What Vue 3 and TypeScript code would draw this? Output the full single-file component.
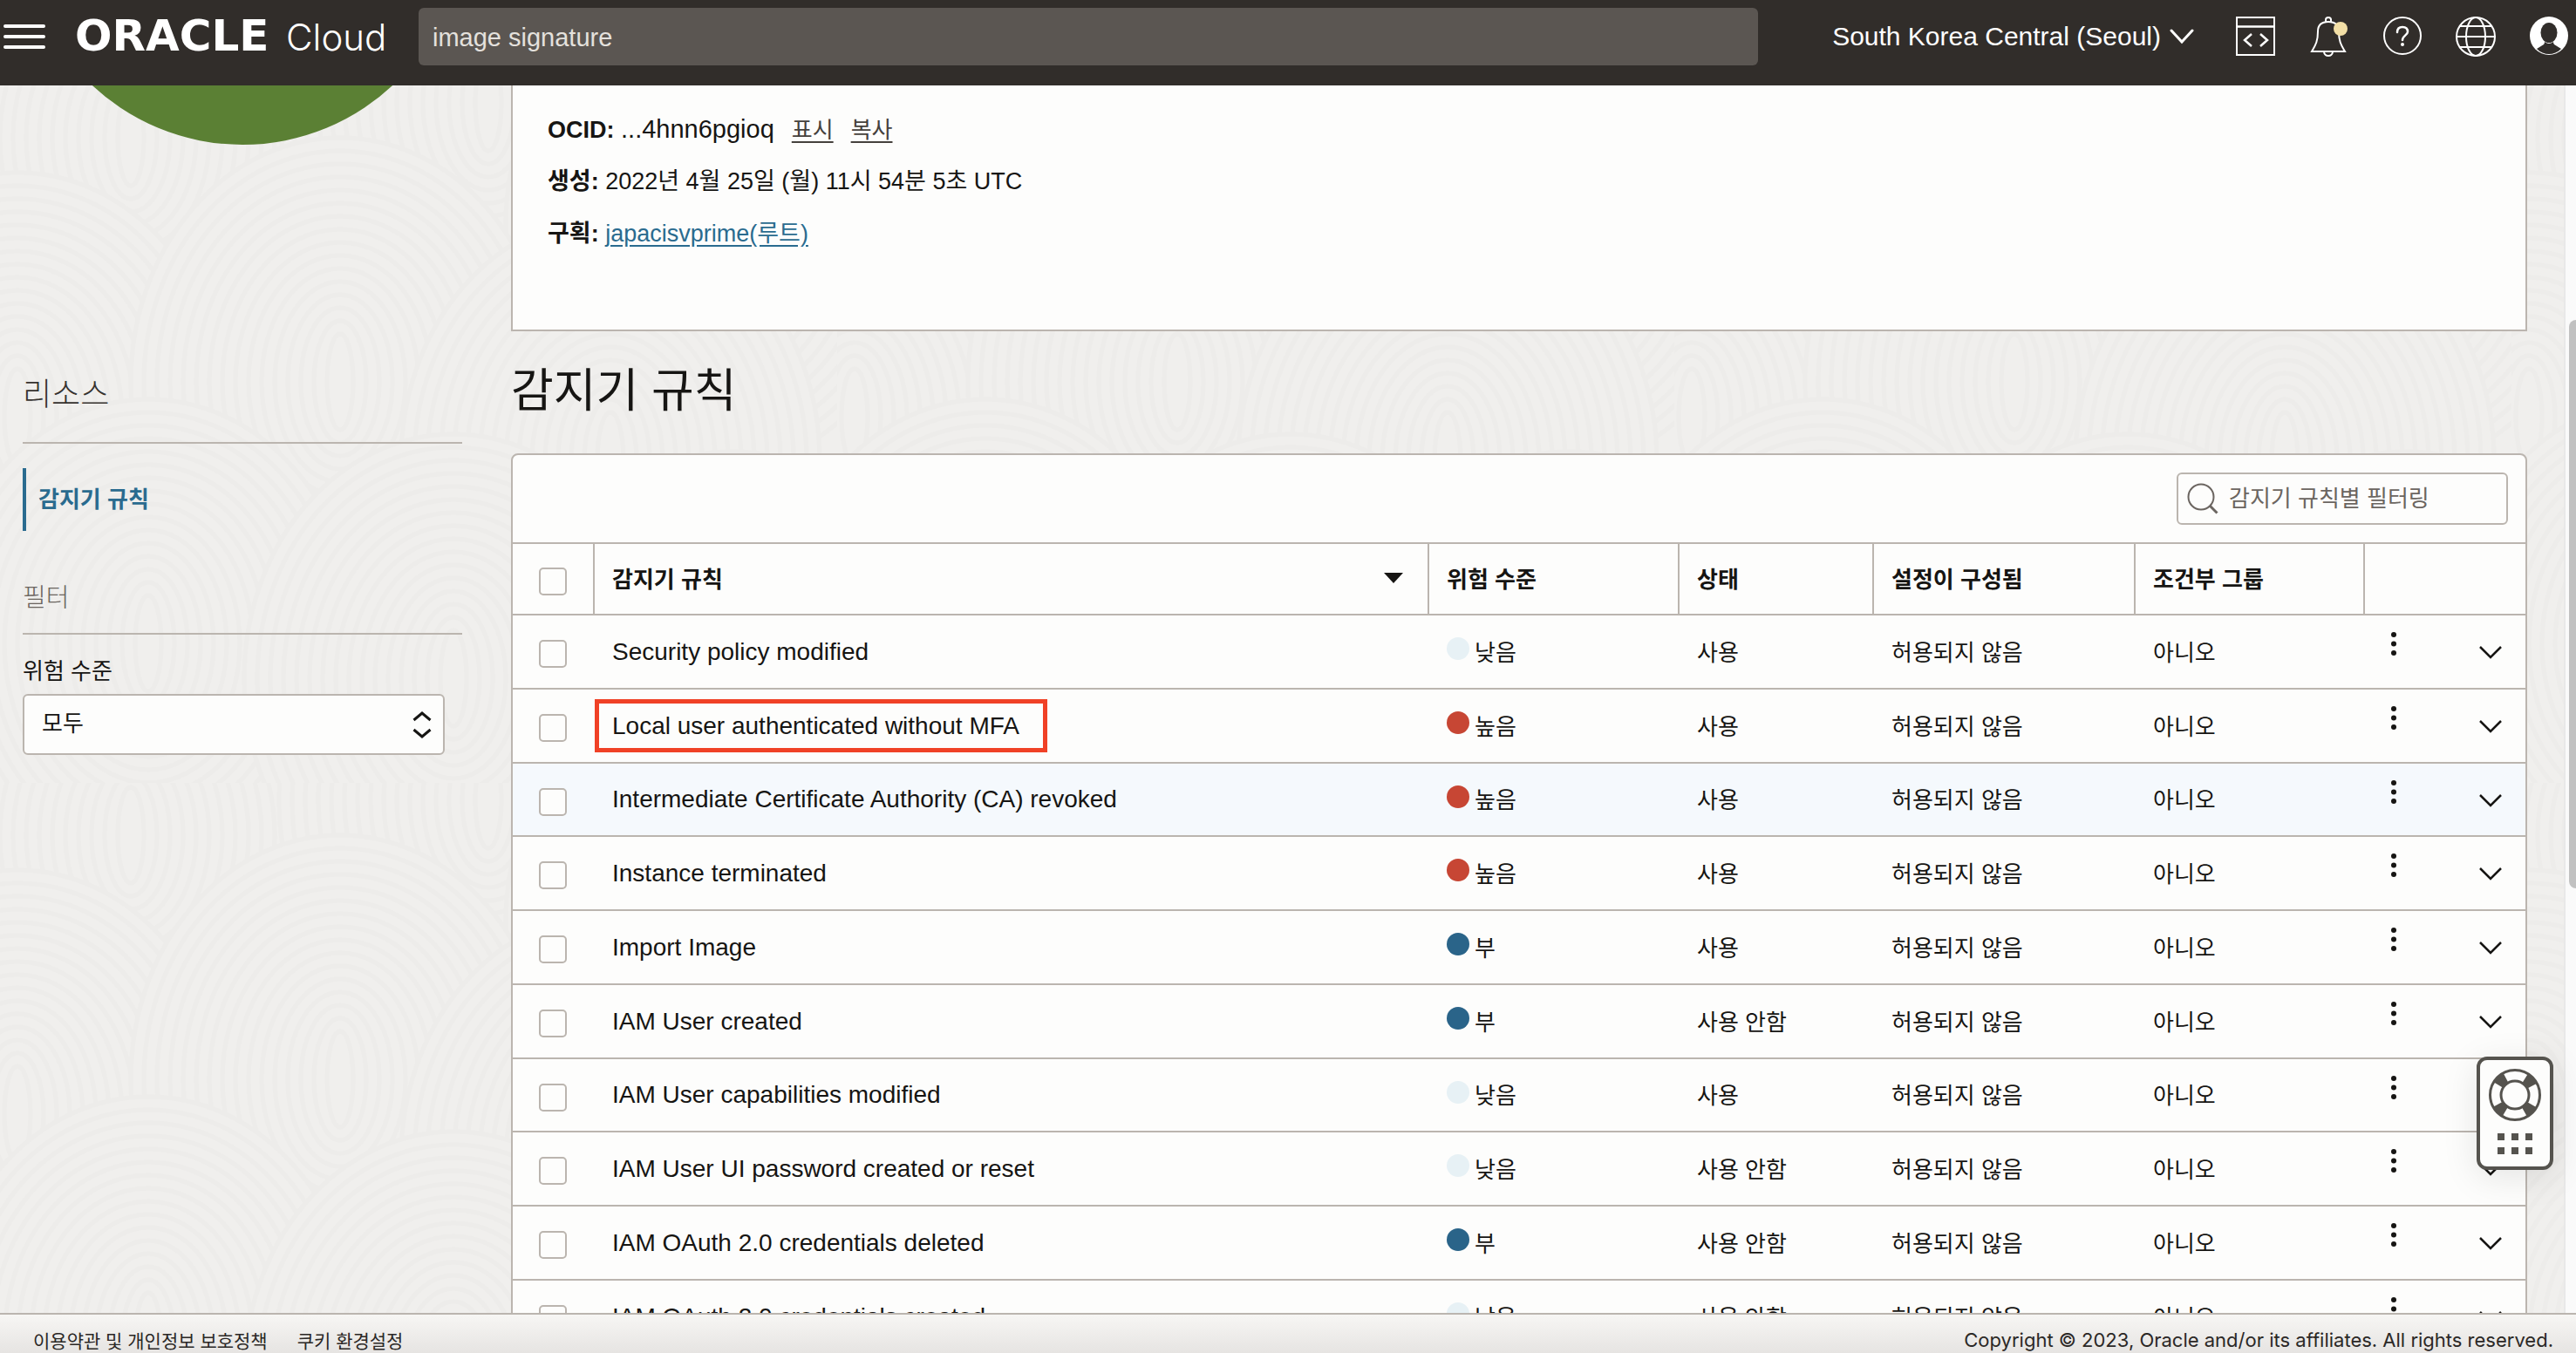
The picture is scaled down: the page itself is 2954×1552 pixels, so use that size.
<script setup lang="ts">
import { ref } from 'vue'

type Risk = 'low' | 'high' | 'minor'

interface Rule {
  name: string
  risk: Risk
  enabled: boolean
  marked?: boolean
  hovered?: boolean
}

const riskLabels: Record<Risk, string> = { low: '낮음', high: '높음', minor: '부' }

const rules: Rule[] = [
  { name: 'Security policy modified', risk: 'low', enabled: true },
  { name: 'Local user authenticated without MFA', risk: 'high', enabled: true, marked: true },
  { name: 'Intermediate Certificate Authority (CA) revoked', risk: 'high', enabled: true, hovered: true },
  { name: 'Instance terminated', risk: 'high', enabled: true },
  { name: 'Import Image', risk: 'minor', enabled: true },
  { name: 'IAM User created', risk: 'minor', enabled: false },
  { name: 'IAM User capabilities modified', risk: 'low', enabled: true },
  { name: 'IAM User UI password created or reset', risk: 'low', enabled: false },
  { name: 'IAM OAuth 2.0 credentials deleted', risk: 'minor', enabled: false },
  { name: 'IAM OAuth 2.0 credentials created', risk: 'low', enabled: false },
]

const query = ref('image signature')
const filter = ref('')
const riskFilter = ref('all')

// Overlapping ring groups of the background texture
const ringGroups = [
  { x: 150, y: 60 }, { x: 560, y: 20 }, { x: 820, y: 160 },
  { x: 20, y: 380 }, { x: 390, y: 340 }, { x: 700, y: 430 },
  { x: 170, y: 640 }, { x: 520, y: 680 }, { x: 840, y: 700 },
]
const ringSizes = Array.from({ length: 16 }, (_, i) => 240 - i * 15)
</script>

<template>
  <div class="app">
    <header class="topbar">
      <button class="icon-btn menu" aria-label="메뉴">
        <svg width="48" height="28" viewBox="0 0 48 28" stroke="#fff" stroke-width="4" stroke-linecap="round">
          <path d="M2 2H46M2 14H46M2 26H46" />
        </svg>
      </button>
      <a class="brand" href="#"><strong>ORACLE</strong><span>Cloud</span></a>
      <input v-model="query" class="search" type="text" aria-label="검색" />
      <div class="tools">
        <button class="region">
          South Korea Central (Seoul)
          <svg width="28" height="18" viewBox="0 0 28 18" fill="none" stroke="#fff" stroke-width="3" stroke-linecap="round">
            <path d="M2 2L14 15L26 2" />
          </svg>
        </button>
        <button class="icon-btn" aria-label="개발자 도구">
          <svg width="46" height="46" viewBox="0 0 46 46" fill="none" stroke="#fff" stroke-width="2">
            <rect x="1" y="1" width="43" height="43" />
            <path d="M1 11.500H44M18 20L10 27L18 34M28 20L36 27L28 34" stroke-width="2.500" />
          </svg>
        </button>
        <button class="icon-btn" aria-label="알림">
          <svg width="46" height="48" viewBox="0 0 46 48" fill="none" stroke="#fff" stroke-width="2">
            <path d="M19 7V4.500Q19 2 22 2Q25 2 25 4.500V7" />
            <path d="M22 7C14 7 10 11 10 18C10 30 7 34 3 41H41C37 34 34 30 34 18C34 11 30 7 22 7Z" />
            <path d="M17 42Q18 46 22 46Q26 46 27 42" />
            <circle cx="36" cy="15" r="8" fill="#f3dfa6" stroke="none" />
          </svg>
        </button>
        <button class="icon-btn" aria-label="도움말">
          <svg width="46" height="46" viewBox="0 0 46 46" fill="none" stroke="#fff" stroke-width="2">
            <circle cx="23" cy="22" r="21" />
            <path d="M17 18C17 14 19 12 23 12C27 12 29 14 29 17.500C29 21 23 22 23 27" stroke-width="2.500" stroke-linecap="round" />
            <circle cx="23" cy="32" r="2" fill="#fff" stroke="none" />
          </svg>
        </button>
        <button class="icon-btn" aria-label="언어">
          <svg width="46" height="46" viewBox="0 0 46 46" fill="none" stroke="#fff" stroke-width="2">
            <circle cx="23" cy="23" r="22" />
            <ellipse cx="23" cy="23" rx="11" ry="22" />
            <path d="M1 23H45M5 11H41M5 35H41" />
          </svg>
        </button>
        <button class="icon-btn" aria-label="프로필">
          <svg width="46" height="46" viewBox="0 0 46 46">
            <circle cx="23" cy="22" r="22" fill="#fff" />
            <ellipse cx="23" cy="18.500" rx="9.500" ry="11.500" fill="#312d2a" />
            <path d="M9 37L17 32Q18 31 18 29Q23 33 28 29Q28 31 29 32L37 37C29 45 17 45 9 37Z" fill="#312d2a" />
          </svg>
        </button>
      </div>
    </header>

    <div class="page">
      <svg class="texture" width="100%" height="100%" aria-hidden="true">
        <defs>
          <pattern id="rings" width="960" height="800" patternUnits="userSpaceOnUse">
            <rect width="960" height="800" fill="#f0efed" />
            <g v-for="(g, i) in ringGroups" :key="i">
              <ellipse
                v-for="r in ringSizes"
                :key="r"
                :cx="g.x"
                :cy="g.y"
                :rx="r"
                :ry="r + 40"
                fill="#f0efed"
                stroke="#edecea"
                stroke-width="5"
              />
            </g>
          </pattern>
        </defs>
        <rect width="100%" height="100%" fill="url(#rings)" />
      </svg>

      <aside class="sidebar">
        <div class="badge-window"><div class="badge"></div></div>
        <h2 class="side-title">리소스</h2>
        <nav><a class="side-link" href="#">감지기 규칙</a></nav>
        <h3 class="side-subtitle">필터</h3>
        <label class="side-label" for="risk">위험 수준</label>
        <div class="select-wrap">
          <select id="risk" v-model="riskFilter">
            <option value="all">모두</option>
            <option value="high">높음</option>
            <option value="low">낮음</option>
          </select>
          <svg width="22" height="32" viewBox="0 0 22 32" fill="none" stroke="#161513" stroke-width="3">
            <path d="M1.500 11L11 3L20.500 11M1.500 22L11 30L20.500 22" />
          </svg>
        </div>
      </aside>

      <main class="content">
        <section class="info">
          <p><b>OCID:</b> <span class="latin">...4hnn6pgioq</span><a class="action" href="#">표시</a><a class="action" href="#">복사</a></p>
          <p><b>생성:</b> 2022년 4월 25일 (월) 11시 54분 5초 UTC</p>
          <p><b>구획:</b> <a class="link" href="#">japacisvprime(루트)</a></p>
        </section>

        <h1>감지기 규칙</h1>

        <section class="panel">
          <div class="panel-tools">
            <label class="filter">
              <svg width="36" height="36" viewBox="0 0 36 36" fill="none" stroke="#6b6560" stroke-width="2">
                <circle cx="16" cy="16" r="14.500" />
                <path d="M26 26L34.500 34.500" stroke-width="3" />
              </svg>
              <input v-model="filter" type="text" placeholder="감지기 규칙별 필터링" aria-label="감지기 규칙별 필터링" />
            </label>
          </div>
          <table>
            <colgroup>
              <col class="c-check" /><col /><col class="c-risk" /><col class="c-status" />
              <col class="c-config" /><col class="c-group" /><col class="c-actions" />
            </colgroup>
            <thead>
              <tr>
                <th class="check"><input type="checkbox" aria-label="모두 선택" /></th>
                <th>
                  <div class="sortable">
                    감지기 규칙
                    <svg width="22" height="12" viewBox="0 0 22 12"><path d="M0 0H22L11 12Z" fill="#161513" /></svg>
                  </div>
                </th>
                <th>위험 수준</th>
                <th>상태</th>
                <th>설정이 구성됨</th>
                <th>조건부 그룹</th>
                <th></th>
              </tr>
            </thead>
            <tbody>
              <tr v-for="rule in rules" :key="rule.name" :class="{ hovered: rule.hovered }">
                <td class="check"><input type="checkbox" :aria-label="rule.name" /></td>
                <td class="name"><span :class="{ marked: rule.marked }">{{ rule.name }}</span></td>
                <td>
                  <div class="risk" :class="rule.risk">
                    <svg width="26" height="32" viewBox="0 0 26 32"><circle cx="13" cy="14" r="13" /></svg>
                    {{ riskLabels[rule.risk] }}
                  </div>
                </td>
                <td>{{ rule.enabled ? '사용' : '사용 안함' }}</td>
                <td>허용되지 않음</td>
                <td>아니오</td>
                <td class="actions">
                  <div>
                    <button class="icon-btn" aria-label="작업">
                      <svg width="26" height="44" viewBox="0 0 26 44" fill="#161513">
                        <circle cx="13" cy="4" r="3" /><circle cx="13" cy="14.500" r="3" /><circle cx="13" cy="25" r="3" />
                      </svg>
                    </button>
                    <button class="icon-btn" aria-label="펼치기">
                      <svg width="26" height="44" viewBox="0 0 26 44" fill="none" stroke="#161513" stroke-width="2.500">
                        <path d="M1 18L13 30L25 18" />
                      </svg>
                    </button>
                  </div>
                </td>
              </tr>
            </tbody>
          </table>
        </section>
      </main>

      <div class="scrollbar"><div class="thumb"></div></div>
    </div>

    <footer class="footer">
      <nav><a href="#">이용약관 및 개인정보 보호정책</a><a href="#">쿠키 환경설정</a></nav>
      <span class="copyright">Copyright © 2023, Oracle and/or its affiliates. All rights reserved.</span>
    </footer>

    <button class="support" aria-label="지원">
      <svg width="60" height="98" viewBox="0 0 60 98" fill="none" stroke="#55534e">
        <circle cx="30" cy="30" r="22.500" stroke-width="13" stroke-dasharray="12 23.343" stroke-dashoffset="-11.670" />
        <circle cx="30" cy="30" r="28.500" stroke-width="3" />
        <circle cx="30" cy="30" r="16" stroke-width="3" />
        <path d="M10 74h8v8h-8zM26 74h8v8h-8zM42 74h8v8h-8zM10 90h8v8h-8zM26 90h8v8h-8zM42 90h8v8h-8z" fill="#55534e" stroke="none" />
      </svg>
    </button>
  </div>
</template>

<style>
body {
  margin: 0;
}
</style>

<style scoped>
.app {
  --line: #bbb5af;
  --ink: #161513;
  --blue: #2a6b8f;
  position: relative;
  display: flex;
  flex-direction: column;
  height: 100vh;
  overflow: hidden;
  color: var(--ink);
  font-family: "Liberation Sans", "Noto Sans CJK KR", sans-serif;
  font-size: 26px;
}

.app *,
.app *::before {
  box-sizing: border-box;
}

button,
input,
select {
  font: inherit;
  color: inherit;
}

button {
  padding: 0;
  border: 0;
  background: none;
}

svg {
  display: block;
  flex: none;
}

.topbar {
  display: flex;
  flex: none;
  align-items: center;
  height: 98px;
  padding: 0 8px 14px 4px;
  background: #312d2a;
  color: #fff;
}

.brand {
  display: flex;
  flex: none;
  align-items: baseline;
  width: 394px;
  margin: 0 0 0 34px;
  color: #fff;
  text-decoration: none;
}

.brand strong {
  width: 242px;
  font: bold 50px/60px "DejaVu Sans", sans-serif;
}

.brand span {
  font: 300 42px/60px Inter, sans-serif;
}

.search {
  flex: 0 1 1536px;
  min-width: 0;
  height: 66px;
  padding: 2px 16px 0;
  border: 0;
  border-radius: 6px;
  background: #5b5652;
  color: #e4e1dd;
  font-size: 29px;
}

.tools {
  display: flex;
  flex: none;
  align-items: center;
  gap: 38px;
  margin-left: auto;
}

.region {
  display: flex;
  align-items: center;
  gap: 10px;
  margin-right: 10px;
  font-size: 30px;
}

.page {
  position: relative;
  display: flex;
  flex: 1;
  min-height: 0;
  padding-left: 26px;
  overflow: hidden;
}

.texture {
  position: absolute;
  inset: 0;
}

.sidebar,
.content,
.scrollbar {
  position: relative;
}

.sidebar {
  flex: none;
  width: 504px;
}

.badge-window {
  display: flex;
  align-items: flex-end;
  height: 68px;
  overflow: hidden;
}

.badge {
  flex: none;
  width: 504px;
  height: 504px;
  border-radius: 50%;
  background: #5b8034;
}

h1,
h2,
h3,
p {
  margin: 0;
}

.side-title {
  margin-top: 255px;
  padding-bottom: 22px;
  border-bottom: 2px solid var(--line);
  color: #36322f;
  font-size: 36px;
  font-weight: 200;
  line-height: 64px;
}

.side-link {
  display: block;
  margin-top: 28px;
  padding-left: 14px;
  border-left: 4px solid var(--blue);
  color: var(--blue);
  font-weight: 700;
  line-height: 72px;
  text-decoration: none;
}

.side-subtitle {
  margin-top: 45px;
  padding-bottom: 8px;
  border-bottom: 2px solid var(--line);
  color: #6b6560;
  font-size: 29px;
  font-weight: 200;
  line-height: 64px;
}

.side-label {
  display: block;
  margin-top: 20px;
  line-height: 44px;
}

.select-wrap {
  position: relative;
  width: 484px;
  margin-top: 4px;
}

.select-wrap select {
  display: block;
  width: 100%;
  height: 70px;
  padding: 0 20px 2px;
  appearance: none;
  border: 2px solid var(--line);
  border-radius: 6px;
  background: #fdfdfc;
}

.select-wrap svg {
  position: absolute;
  top: 19px;
  right: 15px;
  pointer-events: none;
}

.content {
  flex: 1;
  min-width: 0;
  margin: 0 42px 0 56px;
}

.info {
  height: 282px;
  padding: 20px 40px;
  border: 2px solid var(--line);
  border-top: 0;
  background: #fdfdfc;
  font-size: 27px;
}

.info p {
  height: 60px;
  line-height: 60px;
}

.info .action {
  margin-left: 20px;
  color: #45413d;
  font-size: 26px;
  text-underline-offset: 4px;
}

.latin {
  font-size: 29px;
}

.link {
  color: var(--blue);
  text-underline-offset: 4px;
}

h1 {
  padding: 29px 0 31px;
  font-size: 53px;
  font-weight: 400;
  line-height: 80px;
}

.panel {
  border: 2px solid var(--line);
  border-radius: 8px;
  background: #fdfdfc;
}

.panel-tools {
  display: flex;
  justify-content: flex-end;
  padding: 20px;
}

.filter {
  display: flex;
  align-items: center;
  width: 380px;
  height: 60px;
  padding-left: 10px;
  border: 2px solid var(--line);
  border-radius: 6px;
}

.filter input {
  width: 100%;
  padding: 0 12px;
  border: 0;
  background: none;
}

.filter input::placeholder {
  color: #6b6560;
  opacity: 1;
}

table {
  width: 100%;
  table-layout: fixed;
  border-spacing: 0;
}

.c-check {
  width: 94px;
}

.c-risk {
  width: 287px;
}

.c-status {
  width: 223px;
}

.c-config {
  width: 300px;
}

.c-group {
  width: 263px;
}

.c-actions {
  width: 184px;
}

th,
td {
  height: 85px;
  padding: 0 0 3px 20px;
  border-top: 2px solid var(--line);
  text-align: left;
  white-space: nowrap;
}

tr:nth-child(4n + 3) td {
  height: 84px;
}

th {
  height: 82px;
  border-right: 2px solid var(--line);
}

th:last-child {
  border-right: 0;
}

.hovered {
  background: #f5f9fd;
}

.check {
  padding: 5px 0 0 30px;
}

.check input {
  display: block;
  width: 32px;
  height: 32px;
  margin: 0;
  appearance: none;
  border: 2px solid var(--line);
  border-radius: 5px;
  background: #fdfdfc;
}

.sortable {
  display: flex;
  align-items: center;
  justify-content: space-between;
  padding-right: 28px;
}

.name {
  padding-bottom: 0;
  font-size: 28px;
}

.name span {
  position: relative;
}

/* Highlight frame drawn around the rule name */
.marked::before {
  content: "";
  position: absolute;
  inset: -15px -32px -15px -20px;
  border: 5px solid #f04126;
}

.risk {
  display: flex;
  align-items: center;
  gap: 6px;
}

.low svg {
  fill: #e7f1f5;
}

.high svg {
  fill: #c74634;
}

.minor svg {
  fill: #2a6489;
}

.actions div {
  display: flex;
  justify-content: space-between;
  padding-right: 27px;
}

.scrollbar {
  flex: none;
  width: 14px;
  padding-top: 269px;
  overflow: hidden;
  border-left: 2px solid #e8e8e8;
  background: #fafafa;
}

.thumb {
  width: 16px;
  height: 652px;
  margin-left: 4px;
  border-radius: 8px;
  background: #c1c1c1;
}

.footer {
  position: relative;
  display: flex;
  flex: none;
  align-items: center;
  justify-content: space-between;
  height: 46px;
  padding: 14px 26px 0 38px;
  border-top: 2px solid var(--line);
  background: linear-gradient(#f7f6f4, #e6e4e2);
  font-size: 21px;
}

.footer nav {
  display: flex;
  gap: 34px;
}

.footer a {
  color: #2b2826;
  text-decoration: none;
}

.copyright {
  color: #2b2826;
  font-family: Inter, sans-serif;
  font-size: 22px;
}

.support {
  position: absolute;
  right: 26px;
  bottom: 210px;
  width: 88px;
  height: 130px;
  padding: 8px 10px 12px;
  border: 4px solid #55534e;
  border-radius: 12px;
  background: #fdfdfc;
  box-shadow: 0 8px 40px rgba(0, 0, 0, 0.1);
}
</style>
